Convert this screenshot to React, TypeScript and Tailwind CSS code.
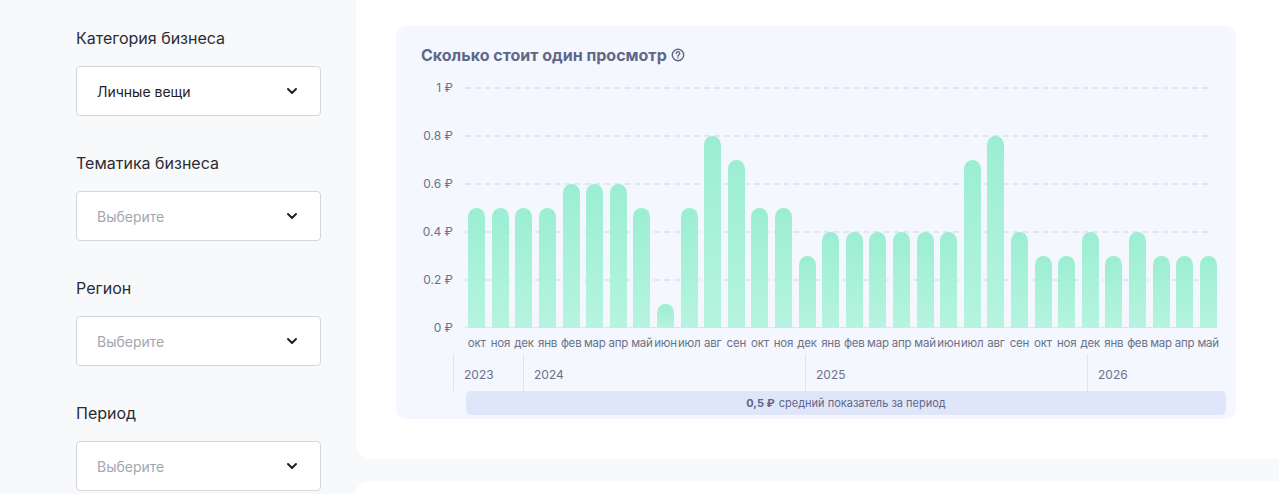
import React from "react";

const months = ["окт","ноя","дек","янв","фев","мар","апр","май","июн","июл","авг","сен","окт","ноя","дек","янв","фев","мар","апр","май","июн","июл","авг","сен","окт","ноя","дек","янв","фев","мар","апр","май"];
const vals = [.5,.5,.5,.5,.6,.6,.6,.5,.1,.5,.8,.7,.5,.5,.3,.4,.4,.4,.4,.4,.4,.7,.8,.4,.3,.3,.4,.3,.4,.3,.3,.3];
const H = 240;

function Select({ label, value }: { label: string; value?: string }) {
  return (
    <div className="flex flex-col">
      <div className="text-[16px] text-[#2a2d34] mb-[17px] leading-[22px]">{label}</div>
      <div className="h-[50px] w-[245px] bg-white border border-[#d4d6db] rounded-[4px] flex items-center justify-between pl-[20px] pr-[22px]">
        <span className={value ? "text-[14px] text-[#1f2126]" : "text-[14px] text-[#a3a7b0]"}>{value ?? "Выберите"}</span>
        <svg width="12" height="8" viewBox="0 0 12 8"><path d="M2 2l4 4 4-4" fill="none" stroke="#1f2126" strokeWidth="2" strokeLinecap="round" strokeLinejoin="round"/></svg>
      </div>
    </div>
  );
}

export default function App() {
  return (
    <div className="w-[1279px] h-[494px] bg-[#f8f9fb] flex overflow-hidden" style={{ fontFamily: "Inter, 'Noto Sans', sans-serif" }}>
      <div className="w-[356px] shrink-0 pl-[76px] pt-[27px] flex flex-col gap-[36px]">
        <Select label="Категория бизнеса" value="Личные вещи" />
        <Select label="Тематика бизнеса" />
        <Select label="Регион" />
        <Select label="Период" />
      </div>
      <div className="flex-1 flex flex-col gap-[22px]">
        <div className="h-[459px] bg-white rounded-bl-[16px] pl-[40px] pt-[26px]">
          <div className="w-[840px] h-[393px] bg-[#f4f7fe] rounded-[10px] pt-[17px]">
            <div className="flex items-center gap-[4px] pl-[25px] text-[16px] font-bold text-[#5e6788]">
              Сколько стоит один просмотр
              <svg width="14" height="14" viewBox="0 0 16 16"><circle cx="8" cy="8" r="6.5" fill="none" stroke="#5e6788" strokeWidth="1.6"/><path d="M6 6.3a2 2 0 1 1 2.6 1.9c-.4.2-.6.5-.6.9v.4" fill="none" stroke="#5e6788" strokeWidth="1.6" strokeLinecap="round"/><circle cx="8" cy="11.4" r=".9" fill="#5e6788"/></svg>
            </div>
            <div className="flex mt-[16px]">
              <div className="w-[59px] flex flex-col justify-between text-right text-[12px] text-[#6b7288] h-[250px] pr-[2px]">
                {["1 ₽","0.8 ₽","0.6 ₽","0.4 ₽","0.2 ₽","0 ₽"].map((t) => <div key={t} className="leading-[10px]">{t}</div>)}
              </div>
              <div className="flex flex-col">
                <div className="relative w-[767px] h-[245px] mt-[5px] pl-[10px] pr-[2px]">
                  {[0,1,2,3,4].map((i) => (
                    <div key={i} className="absolute left-[10px] right-[14px] border-t-[2px] border-dashed border-[#e1e6f6]" style={{ top: i * 48 - 1 }} />
                  ))}
                  <div className="absolute left-[10px] right-[14px] top-[239px] border-t border-[#dfe4f5]" />
                  <div className="relative flex items-end h-[240px] w-[755px]">
                    {vals.map((v, i) => (
                      <div key={i} className="flex-1 flex justify-center">
                        <div className="w-[17px] rounded-t-[9px] bg-gradient-to-b from-[#9beed2] to-[#b6f4e0]" style={{ height: v * H }} />
                      </div>
                    ))}
                  </div>
                </div>
                <div className="flex w-[755px] ml-[10px] text-[11.5px] text-[#6b7288] mt-[3px] leading-[14px]">
                  {months.map((m, i) => <div key={i} className="flex-1 text-center whitespace-nowrap tracking-[-0.2px]">{m}</div>)}
                </div>
              </div>
            </div>
            <div className="flex ml-[57px] mt-[4px] h-[37px] text-[12px] text-[#6b7288]">
              <div className="w-[70px] border-l border-[#dfe4f5] pl-[10px] pt-[12px]">2023</div>
              <div className="w-[282px] border-l border-[#dfe4f5] pl-[10px] pt-[12px]">2024</div>
              <div className="w-[282px] border-l border-[#dfe4f5] pl-[10px] pt-[12px]">2025</div>
              <div className="w-[100px] border-l border-[#dfe4f5] pl-[10px] pt-[12px]">2026</div>
            </div>
            <div className="ml-[70px] w-[760px] h-[24px] bg-[#e0e6fa] rounded-[5px] flex items-center justify-center text-[11px] text-[#5e6788]">
              <b className="mr-[4px]">0,5 ₽</b> средний показатель за период
            </div>
          </div>
        </div>
        <div className="flex-1 bg-white rounded-tl-[16px]" />
      </div>
    </div>
  );
}
